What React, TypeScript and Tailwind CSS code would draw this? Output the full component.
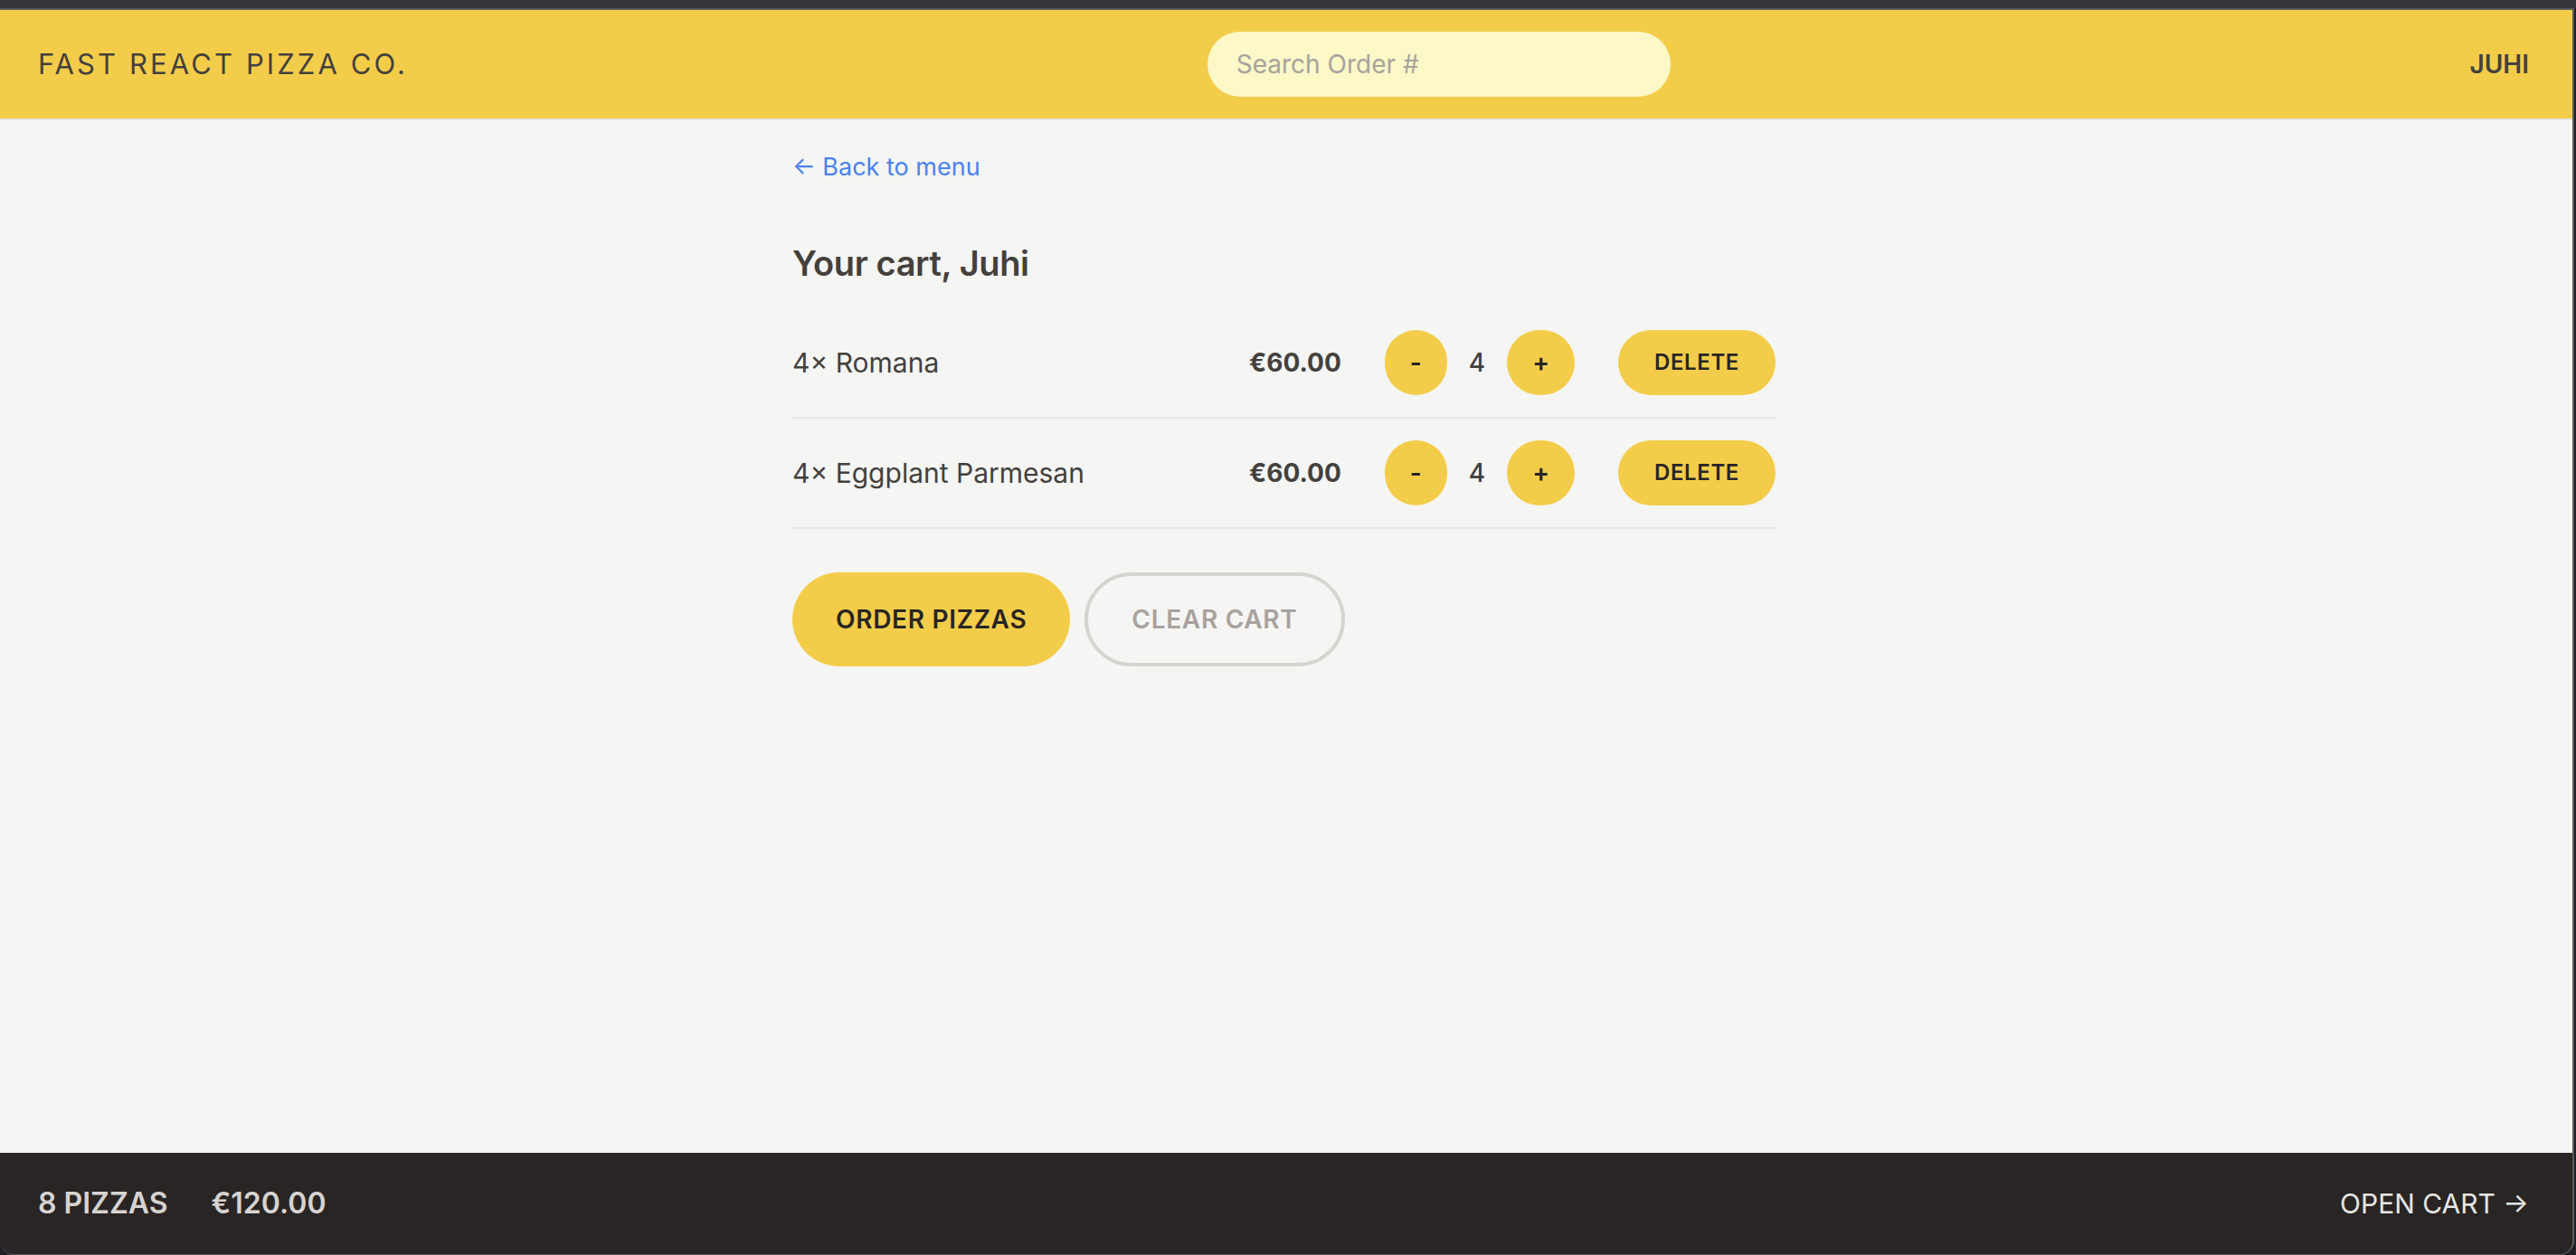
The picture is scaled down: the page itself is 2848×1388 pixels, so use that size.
import React from "react";

type Item = { name: string; qty: number; price: string };

const items: Item[] = [
  { name: "Romana", qty: 4, price: "€60.00" },
  { name: "Eggplant Parmesan", qty: 4, price: "€60.00" },
];

function RoundButton({ label }: { label: string }) {
  return (
    <button className="rounded-full bg-[#f3cd4a] px-[28px] py-[16px] text-[28px] leading-[40px] font-semibold text-[#292524]">
      {label}
    </button>
  );
}

function CartRow({ item }: { item: Item }) {
  return (
    <li className="flex items-center justify-between py-[24px]">
      <p className="text-[30px] leading-[48px] text-[#44403c]">
        {item.qty}&times; {item.name}
      </p>
      <div className="flex items-center gap-[48px]">
        <p className="text-[28px] leading-[40px] font-bold text-[#44403c]">{item.price}</p>
        <div className="flex items-center gap-[24px]">
          <RoundButton label="-" />
          <span className="text-[28px] leading-[40px] font-medium text-[#44403c]">{item.qty}</span>
          <RoundButton label="+" />
        </div>
        <button className="rounded-full bg-[#f3cd4a] px-[40px] py-[20px] text-[24px] leading-[32px] font-semibold uppercase tracking-[0.025em] text-[#292524]">
          Delete
        </button>
      </div>
    </li>
  );
}

export default function App() {
  return (
    <div className="flex h-[1388px] w-[2848px] flex-col overflow-hidden bg-[#202124] font-['Inter','Noto_Sans',sans-serif]">
      <div className="h-[9px] shrink-0 bg-[#35363b]" />
      <div className="flex h-[1379px] w-[2846px] shrink-0 flex-col overflow-hidden rounded-b-[16px] border-t-2 border-r-2 border-b border-[#5a5a5d]">
        <header className="flex h-[122px] shrink-0 items-center justify-between border-b-2 border-[#e7e5e4] bg-[#f3cd4a] pl-[42px] pr-[48px]">
          <a className="text-[31px] leading-[48px] uppercase tracking-[0.1em] text-[#44403c]">
            Fast React Pizza Co.
          </a>
          <input
            placeholder="Search Order #"
            className="h-[72px] w-[512px] rounded-full bg-[#fcf8c7] px-[32px] text-[28px] text-[#44403c] outline-none placeholder:text-[#a8a29e]"
          />
          <p className="text-[28px] leading-[40px] font-semibold uppercase text-[#44403c]">Juhi</p>
        </header>

        <main className="flex-1 bg-[#f5f5f4]">
          <div className="mx-auto w-[1152px] pl-[30px] pr-[35px] pt-[26px] pb-[24px]">
            <div className="text-[32px] leading-[48px]">
              <a className="text-[27px] leading-[40px] text-[#4a82f0]">← Back to menu</a>
            </div>
            <h2 className="mt-[56px] text-[38px] leading-[56px] font-semibold tracking-[-0.01em] text-[#44403c]">
              Your cart, Juhi
            </h2>
            <ul className="mt-[22px] divide-y-2 divide-[#e7e5e4] border-b-2 border-[#e7e5e4]">
              {items.map((it) => (
                <CartRow key={it.name} item={it} />
              ))}
            </ul>
            <div className="mt-[48px] flex gap-[16px]">
              <button className="rounded-full bg-[#f3cd4a] px-[48px] py-[32px] text-[28px] leading-[40px] font-semibold uppercase tracking-[0.025em] text-[#292524]">
                Order pizzas
              </button>
              <button className="rounded-full border-[4px] border-[#d6d3d1] px-[48px] py-[28px] text-[28px] leading-[40px] font-semibold uppercase tracking-[0.025em] text-[#a8a29e]">
                Clear cart
              </button>
            </div>
          </div>
        </main>

        <footer className="flex h-[112px] shrink-0 items-center justify-between bg-[#292524] pl-[42px] pr-[48px] text-[32px] leading-[48px] uppercase text-[#e7e5e4]">
          <p className="flex gap-[48px] font-semibold text-[#d6d3d1]">
            <span>8 pizzas</span>
            <span>€120.00</span>
          </p>
          <a className="text-[30px]">Open cart →</a>
        </footer>
      </div>
    </div>
  );
}
